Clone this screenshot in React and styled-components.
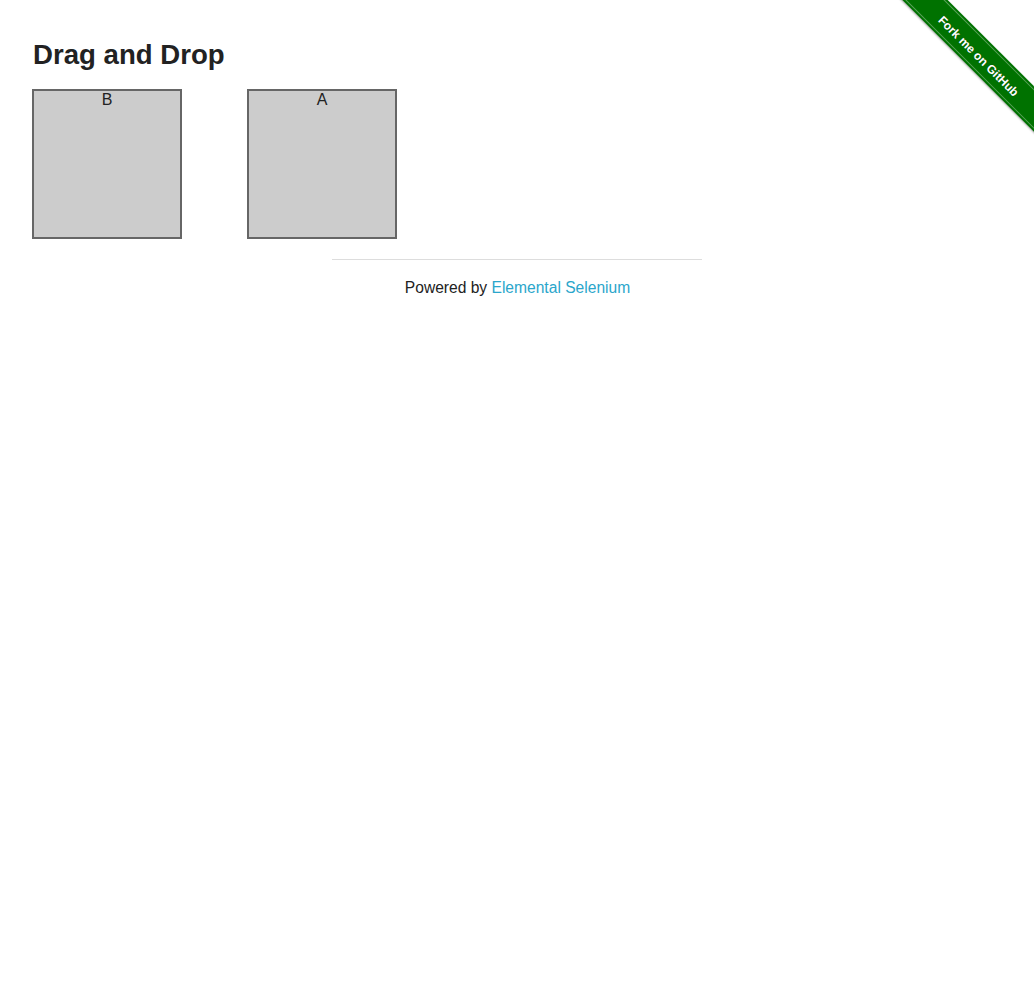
import React from "react";
import styled, { createGlobalStyle } from "styled-components";

const GlobalStyle = createGlobalStyle`
  html, body {
    margin: 0;
    padding: 0;
    background: #fff;
  }
  body {
    font-family: "Liberation Sans", Arial, sans-serif;
    color: #222;
  }
`;

const Page = styled.div`
  position: relative;
  box-sizing: border-box;
  min-height: 1001px;
  padding: 37.6px 32px 0;
`;

const Heading = styled.h3`
  margin: 0 0 0 1px;
  font-size: 27.6px;
  line-height: 33px;
  font-weight: bold;
  color: #222;
`;

const Columns = styled.div`
  display: flex;
  gap: 65px;
  margin-top: 18.4px;
`;

const Column = styled.div`
  box-sizing: border-box;
  width: 150px;
  height: 150px;
  border: 2px solid #666;
  background: #ccc;
  text-align: center;
  cursor: move;
`;

const ColumnHeader = styled.header`
  padding-top: 1px;
  font-size: 16px;
  line-height: 16px;
  color: #222;
`;

const Footer = styled.footer`
  display: flex;
  flex-direction: column;
  align-items: center;
  margin-top: 20px;
`;

const Rule = styled.hr`
  width: 370px;
  height: 1px;
  margin: 0;
  border: 0;
  background: #ddd;
`;

const Powered = styled.div`
  margin-top: 18px;
  padding-left: 1px;
  font-size: 15.6px;
  line-height: 20px;
  color: #222;
`;

const Link = styled.a`
  color: #2ba6cb;
  text-decoration: none;
`;

const RibbonCorner = styled.a`
  position: absolute;
  top: 0;
  right: 0;
  width: 149px;
  height: 149px;
  overflow: hidden;
  text-decoration: none;
`;

const Ribbon = styled.div`
  position: absolute;
  left: -23px;
  top: 36px;
  width: 230px;
  height: 32px;
  box-sizing: border-box;
  transform: rotate(45deg);
  background: #007200;
  box-shadow: 0 1px 2px rgba(0, 0, 0, 0.35);
  display: flex;
  align-items: center;
  justify-content: center;
  &::before,
  &::after {
    content: "";
    position: absolute;
    left: 0;
    right: 0;
    height: 1px;
    background: rgba(255, 255, 255, 0.35);
  }
  &::before { top: 2px; }
  &::after { bottom: 2px; }
`;

const RibbonText = styled.span`
  font-family: "Liberation Sans", Arial, sans-serif;
  font-weight: bold;
  font-size: 12px;
  color: #fff;
  text-shadow: 0 0 1px rgba(0, 0, 0, 0.4);
  margin: 4px 0 0 8px;
`;

export default function App() {
  return (
    <>
      <GlobalStyle />
      <Page>
        <Heading>Drag and Drop</Heading>
        <Columns>
          <Column draggable>
            <ColumnHeader>B</ColumnHeader>
          </Column>
          <Column draggable>
            <ColumnHeader>A</ColumnHeader>
          </Column>
        </Columns>
        <Footer>
          <Rule />
          <Powered>
            Powered by <Link href="#">Elemental Selenium</Link>
          </Powered>
        </Footer>
        <RibbonCorner href="#">
          <Ribbon>
            <RibbonText>Fork me on GitHub</RibbonText>
          </Ribbon>
        </RibbonCorner>
      </Page>
    </>
  );
}
